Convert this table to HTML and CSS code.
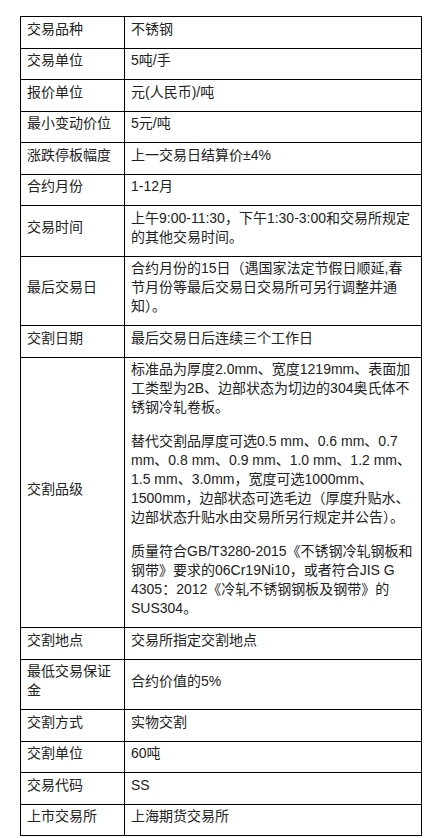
FILE: index.html
```html
<!DOCTYPE html>
<html lang="zh-CN">
<head>
<meta charset="utf-8">
<title>不锈钢期货合约</title>
<link rel="stylesheet" href="styles.css">
</head>
<body>
<table class="spec">
  <colgroup><col class="c-label"><col class="c-value"></colgroup>
  <tbody>
    <tr><td>交易品种</td><td>不锈钢</td></tr>
    <tr><td>交易单位</td><td>5吨/手</td></tr>
    <tr><td>报价单位</td><td>元(人民币)/吨</td></tr>
    <tr><td>最小变动价位</td><td>5元/吨</td></tr>
    <tr><td>涨跌停板幅度</td><td>上一交易日结算价±4%</td></tr>
    <tr><td>合约月份</td><td>1-12月</td></tr>
    <tr><td>交易时间</td><td>上午9:00-11:30，下午1:30-3:00和交易所规定的其他交易时间。</td></tr>
    <tr><td>最后交易日</td><td>合约月份的15日（遇国家法定节假日顺延,春节月份等最后交易日交易所可另行调整并通知）。</td></tr>
    <tr><td>交割日期</td><td>最后交易日后连续三个工作日</td></tr>
    <tr><td>交割品级</td><td>
      <p>标准品为厚度2.0mm、宽度1219mm、表面加工类型为2B、边部状态为切边的304奥氏体不锈钢冷轧卷板。</p>
      <p>替代交割品厚度可选0.5 mm、0.6 mm、0.7 mm、0.8 mm、0.9 mm、1.0 mm、1.2 mm、1.5 mm、3.0mm，宽度可选1000mm、1500mm，边部状态可选毛边（厚度升贴水、边部状态升贴水由交易所另行规定并公告）。</p>
      <p>质量符合GB/T3280-2015《不锈钢冷轧钢板和钢带》要求的06Cr19Ni10，或者符合JIS G 4305：2012《冷轧不锈钢钢板及钢带》的SUS304。</p>
    </td></tr>
    <tr><td>交割地点</td><td>交易所指定交割地点</td></tr>
    <tr><td>最低交易保证金</td><td>合约价值的5%</td></tr>
    <tr><td>交割方式</td><td>实物交割</td></tr>
    <tr><td>交割单位</td><td>60吨</td></tr>
    <tr><td>交易代码</td><td>SS</td></tr>
    <tr><td>上市交易所</td><td>上海期货交易所</td></tr>
  </tbody>
</table>
</body>
</html>
```
FILE: styles.css
```css
html, body {
  margin: 0;
  padding: 0;
  background: #ffffff;
}

body {
  font-family: "Liberation Sans", "Noto Sans CJK SC", sans-serif;
  font-size: 14px;
  line-height: 19px;
  color: #222222;
}

.spec {
  margin: 16px 0 0 20px;
  width: 402px;
  border-collapse: collapse;
  table-layout: fixed;
}

.c-label {
  width: 104px;
}

.spec td {
  border: 1px solid #000000;
  padding: 2.5px 6px 9px;
  vertical-align: middle;
}

.spec p {
  margin: 0;
}

.spec p + p {
  margin-top: 15px;
}
```
